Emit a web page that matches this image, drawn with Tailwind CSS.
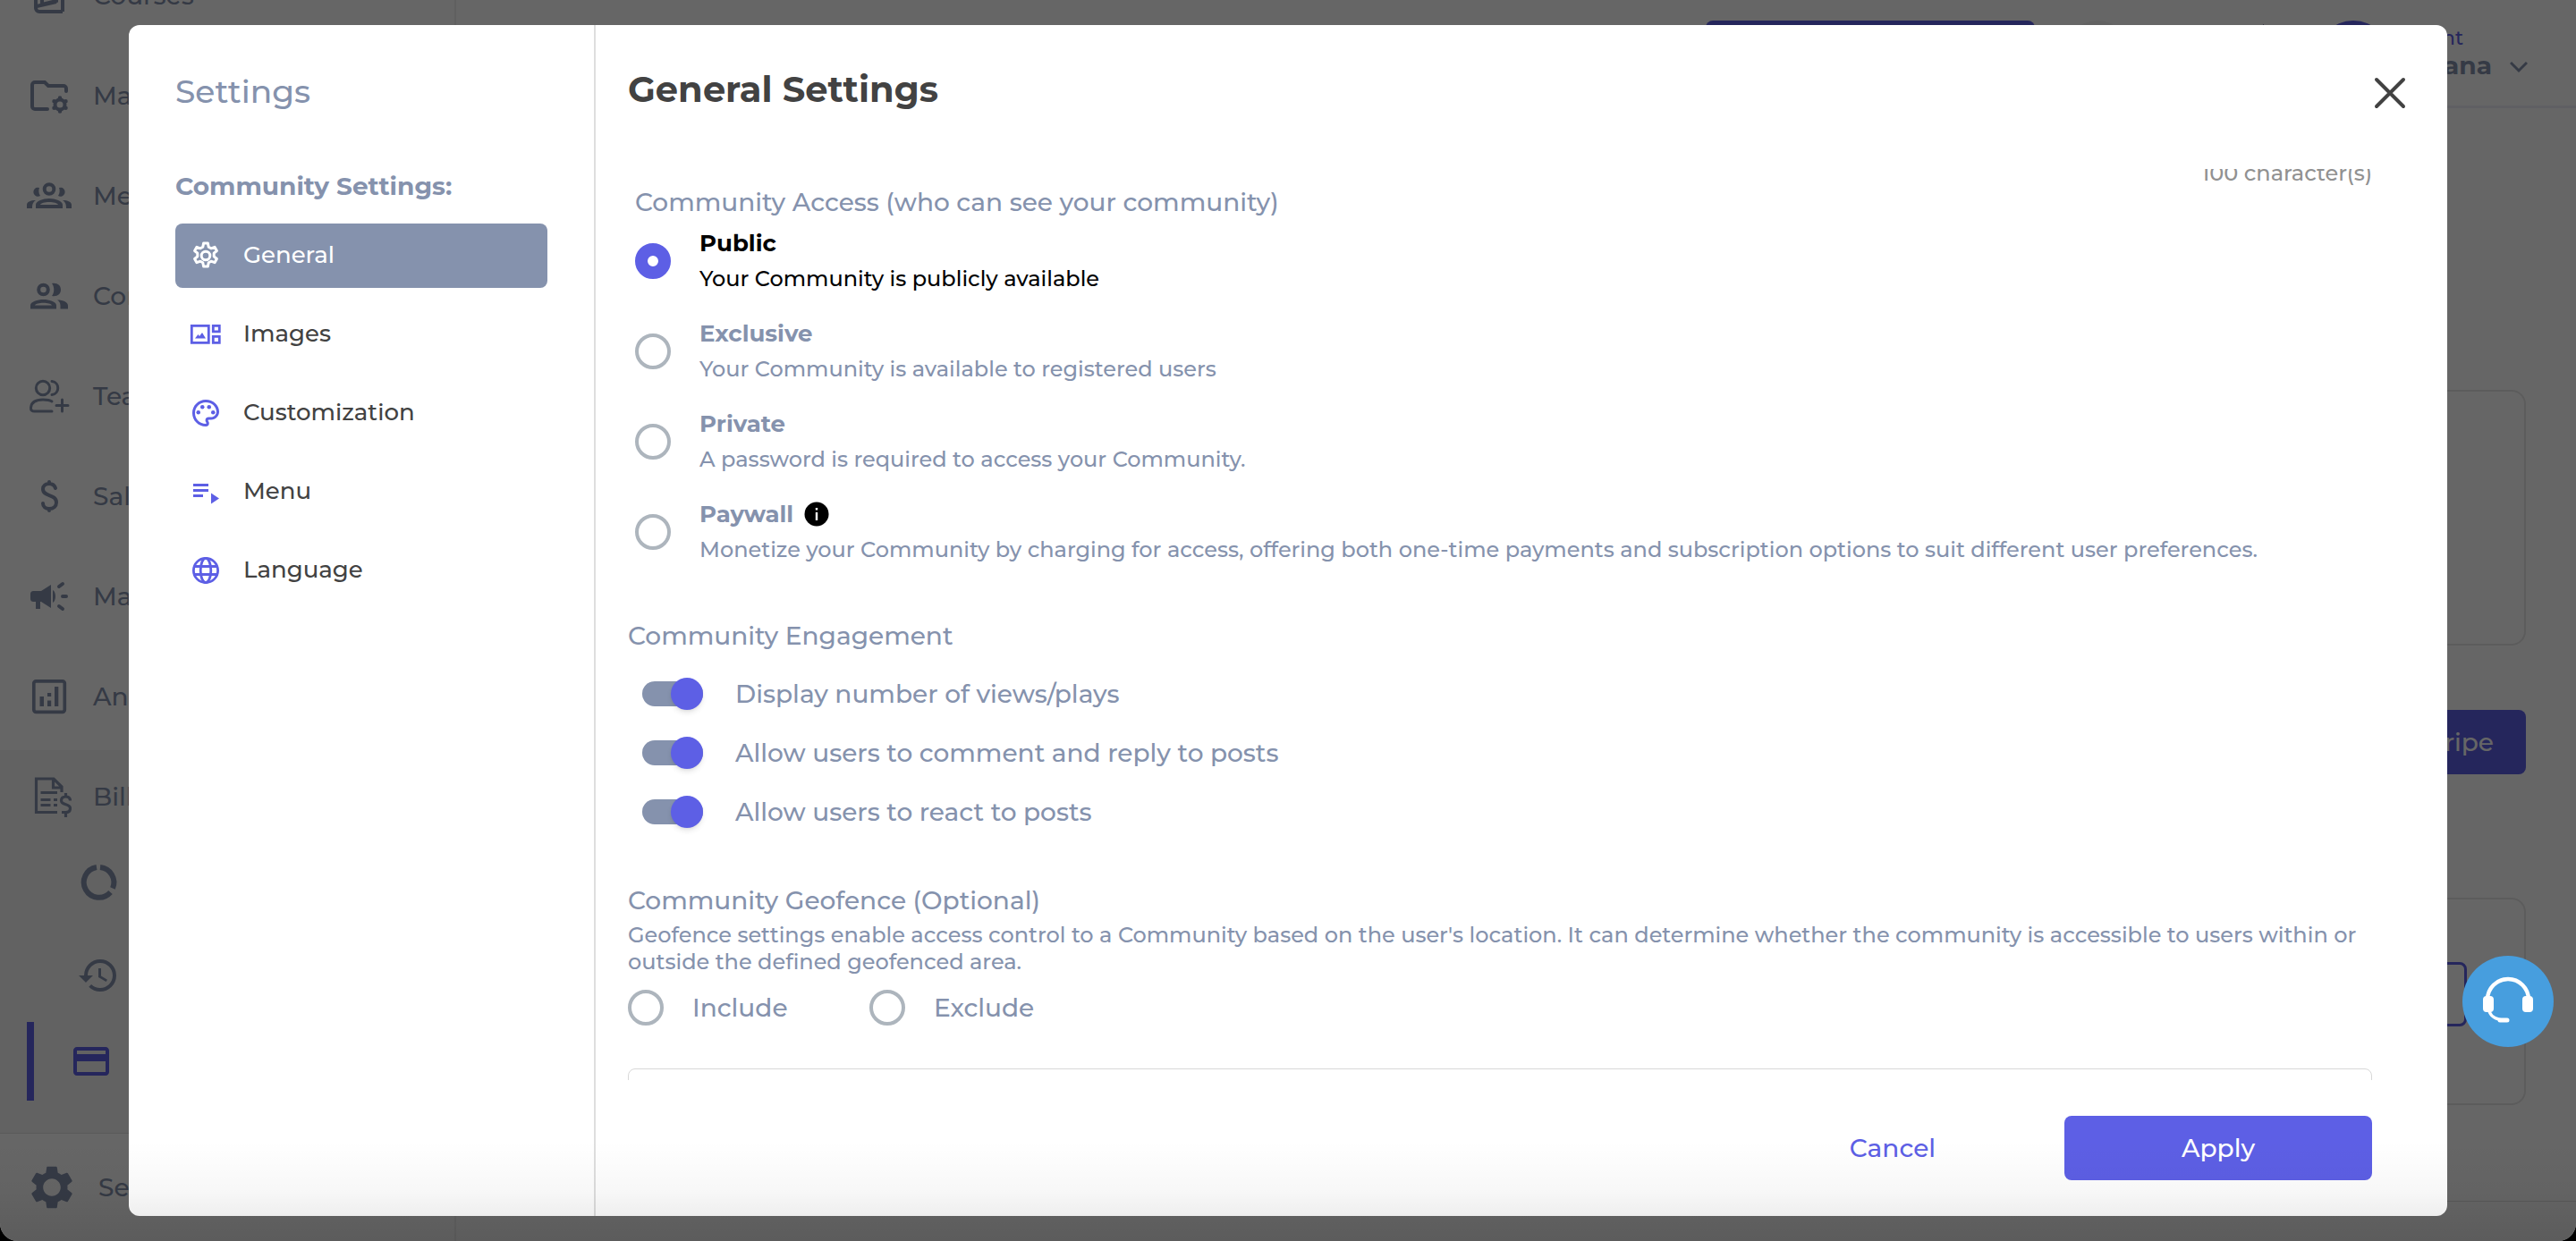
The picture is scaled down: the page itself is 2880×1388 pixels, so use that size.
<!DOCTYPE html>
<html lang="en">
<head>
    <meta charset="UTF-8">
    <meta name="viewport" content="width=device-width, initial-scale=1.0">
    <title>General Settings</title>
    <script src="https://cdn.jsdelivr.net/npm/@tailwindcss/browser@4"></script>
</head>
<body class="bg-black font-['Montserrat','Inter',sans-serif] font-medium">
    <div class="relative h-screen overflow-hidden rounded-b-[20px] bg-white text-[#8592ad]">
        <!-- Dashboard behind the dialog -->
        <div class="flex h-full">
            <aside class="flex w-[510px] shrink-0 flex-col border-r-2 border-[#f0f0f0] text-[28px]">
                <nav class="-mt-[61px]">
                    <a href="#" class="flex h-28 items-center gap-6 pl-[30px]">
                        <svg class="size-[50px]" viewBox="0 0 50 50" fill="none" stroke="currentColor" stroke-width="4"><path d="M40 43H14a4 4 0 0 1-4-4V10h30v33"/><path d="M17 10v25l16-4V10M11 37l22-5"/></svg>
                        <span>Courses</span>
                    </a>
                    <a href="#" class="flex h-28 items-center gap-6 pl-[30px]">
                        <svg class="size-[50px]" viewBox="0 0 50 50" fill="none" stroke="currentColor" stroke-width="4" stroke-linecap="round"><path d="M44 20v-3a3 3 0 0 0-3-3H24l-4-4H9a3 3 0 0 0-3 3v24a3 3 0 0 0 3 3h14"/><circle cx="37" cy="35" r="5.5"/><path stroke-width="4.5" d="M37 27.500v0M43.500 31.300v0M43.500 38.800v0M37 42.500v0M30.500 38.800v0M30.500 31.300v0"/></svg>
                        <span>Manage</span>
                    </a>
                    <a href="#" class="flex h-28 items-center gap-6 pl-[30px]">
                        <svg class="size-[50px]" viewBox="0 0 50 50" fill="currentColor"><circle cx="25" cy="17.500" r="5.300" fill="none" stroke="currentColor" stroke-width="4"/><path fill-rule="evenodd" d="M10 39v-4c0-4 8-7 15-7s15 3 15 7v4zm5-4h20c-1-2-5-3-10-3s-9 1-10 3z"/><path d="M14 16a5 5 0 1 0 1 9c-2-3-2-6-1-9zM36 16a5 5 0 1 1-1 9c2-3 2-6 1-9zM0 39v-4c0-3 4-5 10-5-3 2-4 4-4 9zM50 39v-4c0-3-4-5-10-5 3 2 4 4 4 9z"/></svg>
                        <span>Members</span>
                    </a>
                    <a href="#" class="flex h-28 items-center gap-6 pl-[30px]">
                        <svg class="size-[50px]" viewBox="0 0 50 50" fill="currentColor"><circle cx="18.500" cy="18" r="5.300" fill="none" stroke="currentColor" stroke-width="4"/><path fill-rule="evenodd" d="M4 39.500v-4c0-4 8-6.500 14.500-6.500S33 31.500 33 35.500v4zm5-4h19c-1-1.700-5-2.700-9.500-2.700S10 33.800 9 35.500z"/><path d="M28 11c6-1 10 2 10 7s-4 8-10 7c3-4 3-10 0-14zM34 29.500c7 0 12 2.500 12 6.500v3.500h-8.500V36c0-3-1-5-3.500-6.500z"/></svg>
                        <span>Community</span>
                    </a>
                    <a href="#" class="flex h-28 items-center gap-6 pl-[30px]">
                        <svg class="size-[50px]" viewBox="0 0 50 50" fill="none" stroke="currentColor" stroke-width="3" stroke-linecap="round"><circle cx="18" cy="16" r="7.700"/><path d="M28 8.500c9 1 9 14 0 15M28 31c-3-2-6-2-10-2-8 0-13 3-13.500 9-.2 3 1.500 4 4 4H28M39.500 29v13M33 35.500h13"/></svg>
                        <span>Team</span>
                    </a>
                    <a href="#" class="flex h-28 items-center gap-6 pl-[30px]">
                        <svg class="size-[50px]" viewBox="0 0 50 50" fill="none" stroke="currentColor" stroke-width="4" stroke-linecap="round"><path d="M32 16c-1-3-3-5-7-5s-7 2-7 6c0 9 15 5 15 15 0 4-3 7-8 7-4 0-7-2-7-6M25 9v2M25 39v2"/></svg>
                        <span>Sales</span>
                    </a>
                    <a href="#" class="flex h-28 items-center gap-6 pl-[30px]">
                        <svg class="size-[50px]" viewBox="0 0 50 50" fill="currentColor"><path d="M8 19h8l11-7v26l-11-7h-1v8h-5v-8H8c-3 0-4-1-4-4v-4c0-3 1-4 4-4zM29 18c4 2 4 12 0 14z"/><path fill="none" stroke="currentColor" stroke-width="4" stroke-linecap="round" d="m36 14 4-3M40 25h4M36 36l4 3"/></svg>
                        <span>Marketing</span>
                    </a>
                    <a href="#" class="flex h-28 items-center gap-6 pl-[30px]">
                        <svg class="size-[50px]" viewBox="0 0 50 50" fill="currentColor"><rect x="7.800" y="7.800" width="34.500" height="34.500" rx="2.500" fill="none" stroke="currentColor" stroke-width="3.700"/><path d="M14.500 25H19v11h-4.500zM23 21h4.200v4H23zM23 29.500h4.200V36H23zM31 14h4.300v22H31z"/></svg>
                        <span>Analytics</span>
                    </a>
                </nav>
                <div class="mt-1 h-[428px] bg-[#f5f5f5]">
                    <a href="#" class="flex h-[104px] items-center gap-6 pl-[30px]">
                        <svg class="size-[50px]" viewBox="0 0 50 50" fill="none" stroke="currentColor" stroke-width="3.200"><path d="M34 42.500H10.500V5H30l9 9v6M29.500 5v10H39M15.500 20.500H34M15.500 28.500h11M30 28.500h4M15.500 34.500h11M30 34.500h4"/><path d="M48.500 29.500c0-3-2-4.500-5-4.500s-5 1.500-5 4.500c0 5.500 10 3 10 8.500 0 3-2 4.500-5 4.500H39M43.500 21v4M43.500 42.500V48"/></svg>
                        <span>Billing</span>
                    </a>
                    <a href="#" aria-label="Usage" class="flex h-[88px] items-center pl-[86px]">
                        <svg class="size-12" viewBox="0 0 48 48" fill="none" stroke="currentColor" stroke-width="6"><path d="M26 7a17 17 0 0 1 14 23.500M37.500 35A17 17 0 1 1 22 7"/></svg>
                    </a>
                    <a href="#" aria-label="History" class="flex h-28 items-center pt-2 pl-[86px]">
                        <svg class="size-12" viewBox="0 0 24 24" fill="currentColor"><path d="M13 3a9 9 0 0 0-9 9H1l3.890 3.890.070.140L9 12H6c0-3.870 3.130-7 7-7s7 3.130 7 7-3.130 7-7 7c-1.930 0-3.680-.790-4.940-2.060l-1.420 1.420A8.950 8.950 0 0 0 13 21a9 9 0 0 0 0-18zm-1 5v5l4.280 2.540.720-1.210-3.500-2.080V8H12z"/></svg>
                    </a>
                    <a href="#" aria-label="Payments" class="ml-[30px] flex h-[88px] items-center border-l-8 border-[#5d5fe5] pl-10 text-[#5d5fe5]">
                        <svg class="size-12" viewBox="0 0 24 24" fill="currentColor"><path d="M20 4H4c-1.110 0-2 .890-2 2v12c0 1.110.890 2 2 2h16c1.110 0 2-.890 2-2V6c0-1.110-.890-2-2-2zm0 14H4v-6h16v6zm0-10H4V6h16v2z"/></svg>
                    </a>
                </div>
                <a href="#" class="flex flex-1 items-center gap-6 border-t border-[#e2e2e2] pl-[30px]">
                    <svg class="size-14" viewBox="0 0 24 24" fill="currentColor"><path d="M19.430 12.980c.040-.320.070-.640.070-.980s-.030-.660-.070-.980l2.110-1.650c.190-.150.240-.420.120-.640l-2-3.460c-.120-.220-.390-.300-.610-.220l-2.490 1c-.520-.400-1.080-.730-1.690-.980l-.380-2.650A.488.488 0 0 0 14 2h-4c-.250 0-.460.180-.490.420l-.380 2.650c-.610.250-1.170.590-1.690.980l-2.490-1c-.230-.090-.490 0-.610.220l-2 3.460c-.130.220-.070.490.120.640l2.110 1.650c-.040.320-.070.650-.070.980s.030.660.070.980l-2.110 1.650c-.190.150-.240.420-.120.640l2 3.460c.120.220.390.300.610.220l2.490-1c.520.400 1.080.730 1.690.980l.380 2.650c.030.240.240.420.490.420h4c.250 0 .460-.180.490-.420l.380-2.650c.610-.250 1.170-.590 1.690-.980l2.490 1c.230.090.490 0 .610-.220l2-3.460c.120-.220.070-.490-.120-.640l-2.110-1.650zM12 16.200c-2.310 0-4.200-1.890-4.200-4.200s1.890-4.200 4.200-4.200 4.200 1.890 4.200 4.200-1.890 4.200-4.200 4.200z"/></svg>
                    <span>Settings</span>
                </a>
            </aside>

            <main class="flex min-w-0 flex-1 flex-col">
                <header class="flex h-[121px] items-start justify-end border-b-[3px] border-[#eeeef8] pt-[23px] pr-[54px]">
                    <button class="mr-8 h-[72px] w-[368px] rounded-lg bg-[#5d5fe5]" aria-label="Create"></button>
                    <span class="mr-[147px] size-[76px] rounded-full bg-[#f5f5f5]"></span>
                    <span class="mt-1 mr-[58px] h-16 w-px bg-[#8592ad]"></span>
                    <span class="mr-2 size-[84px] rounded-full bg-[#5d5fe5]"></span>
                    <button class="flex items-end gap-5 text-right">
                        <span>
                            <span class="block pr-8 text-[22px] leading-10 text-[#5d5fe5]">Client</span>
                            <span class="block w-[105px] text-[28px] leading-5 font-bold">Diana</span>
                        </span>
                        <svg class="h-4 w-5" viewBox="0 0 20 16" fill="none" stroke="currentColor" stroke-width="3"><path d="m1 3 9 9 9-9"/></svg>
                    </button>
                </header>
                <div class="flex flex-1 flex-col pt-[315px] pr-14 pl-12">
                    <section class="h-[286px] rounded-2xl border-2 border-[#e6e6e6]"></section>
                    <button class="mt-[72px] h-[72px] self-end rounded-lg bg-[#5d5fe5] px-9 text-[28px] text-white">Connect Stripe</button>
                    <section class="mt-[138px] h-[232px] rounded-2xl border-2 border-[#e6e6e6] pt-[70px] pr-16 text-right">
                        <button class="h-[72px] w-80 rounded-lg border-[3px] border-[#5d5fe5]" aria-label="Manage plan"></button>
                    </section>
                    <div class="-mr-14 mt-[107px] border-t border-[#dedede]"></div>
                </div>
            </main>
        </div>

        <!-- Backdrop and dialog -->
        <div class="absolute inset-0 flex items-center justify-center bg-black/60">
            <div role="dialog" aria-labelledby="dialog-title" class="flex h-[96%] w-[90%] overflow-hidden rounded-xl bg-white">
                <aside class="w-[522px] shrink-0 border-r-2 border-[#dedede] px-13">
                    <h2 class="pt-[54px] text-[36px] leading-10 font-medium">Settings</h2>
                    <h3 class="mt-[66px] text-[28px] leading-10 font-bold">Community Settings:</h3>
                    <nav class="mt-[22px] flex flex-col gap-4 text-[26px] text-[#424242]">
                        <a href="#" class="flex h-[72px] items-center gap-6 rounded-lg bg-[#8592ad] pl-4 text-white">
                            <svg class="size-9" viewBox="0 0 36 36" fill="none" stroke="currentColor" stroke-width="3" stroke-linejoin="round"><path d="M15.600 4h4.800l.8 4.200 2.800 1.600 4-1.500 2.400 4.200-3.200 2.700v3.600l3.200 2.700-2.400 4.200-4-1.500-2.800 1.600-.8 4.200h-4.800l-.8-4.200-2.800-1.600-4 1.500-2.400-4.200 3.200-2.700v-3.600l-3.200-2.700L8 8.300l4 1.500 2.800-1.600z"/><circle cx="18" cy="18" r="4.800"/></svg>
                            General
                        </a>
                        <a href="#" class="flex h-[72px] items-center gap-6 pl-4">
                            <svg class="size-9 text-[#5d5fe5]" viewBox="0 0 36 36" fill="none" stroke="currentColor" stroke-width="2.800"><path d="M2.300 8.300h19v19h-19zM26.300 8.300h7v6.500h-7zM26.300 20.300h7v7h-7z"/><path fill="currentColor" stroke="none" d="m6 22.500 3.500-4.500 1.500 2 3-4 4 6.500z"/></svg>
                            Images
                        </a>
                        <a href="#" class="flex h-[72px] items-center gap-6 pl-4">
                            <svg class="size-9 text-[#5d5fe5]" viewBox="0 0 24 24" fill="currentColor"><path d="M12 22C6.490 22 2 17.510 2 12S6.490 2 12 2s10 4.040 10 9c0 3.310-2.690 6-6 6h-1.770c-.280 0-.500.220-.500.500 0 .120.050.230.130.330.410.470.640 1.060.640 1.670A2.500 2.500 0 0 1 12 22zm0-18c-4.410 0-8 3.590-8 8s3.590 8 8 8c.280 0 .500-.220.500-.500a.540.540 0 0 0-.140-.350c-.410-.460-.630-1.050-.630-1.650a2.500 2.500 0 0 1 2.500-2.500H16c2.210 0 4-1.790 4-4 0-3.860-3.590-7-8-7z"/><circle cx="6.500" cy="11.500" r="1.500"/><circle cx="9.500" cy="7.500" r="1.500"/><circle cx="14.500" cy="7.500" r="1.500"/><circle cx="17.500" cy="11.500" r="1.500"/></svg>
                            Customization
                        </a>
                        <a href="#" class="flex h-[72px] items-center gap-6 pl-4">
                            <svg class="size-9 text-[#5d5fe5]" viewBox="0 0 36 36" fill="currentColor"><path d="M4 9h17v3H4zM4 15h17v3H4zM4 21h11v3H4zM24 19.500l9 6-9 6z"/></svg>
                            Menu
                        </a>
                        <a href="#" class="flex h-[72px] items-center gap-6 pl-4">
                            <svg class="size-9 text-[#5d5fe5]" viewBox="0 0 36 36" fill="none" stroke="currentColor" stroke-width="2.800"><circle cx="18" cy="18" r="13.600"/><ellipse cx="18" cy="18" rx="5.800" ry="13.600"/><path d="M5 13.500h26M5 22.500h26"/></svg>
                            Language
                        </a>
                    </nav>
                </aside>

                <div class="flex min-w-0 flex-1 flex-col pl-9">
                    <div class="flex h-[161px] items-start justify-between pr-[46px]">
                        <h1 id="dialog-title" class="pt-[52px] text-[40px] leading-10 font-bold text-[#424242]">General Settings</h1>
                        <button aria-label="Close" class="mt-[58px] text-[#424242]">
                            <svg class="size-9" viewBox="0 0 36 36" fill="none" stroke="currentColor" stroke-width="4" stroke-linecap="round"><path d="m3 3 30 30M33 3 3 33"/></svg>
                        </button>
                    </div>

                    <div class="min-h-0 flex-1 overflow-hidden pr-[84px]">
                        <p class="-mt-[11px] text-right text-[24px] leading-8 text-[#919191]">100 character(s)</p>
                        <fieldset class="px-2">
                            <legend class="text-[28px] leading-8">Community Access (who can see your community)</legend>
                            <div class="mt-2.5 flex flex-col gap-[21px]">
                                <label class="flex items-center gap-8 text-black">
                                    <input type="radio" name="access" checked class="size-10 shrink-0 appearance-none rounded-full border-4 border-[#adb5bd] checked:border-[14px] checked:border-[#5d5fe5]">
                                    <span class="text-[24px] leading-10"><b class="block text-[26px] font-bold">Public</b>Your Community is publicly available</span>
                                </label>
                                <label class="flex items-center gap-8">
                                    <input type="radio" name="access" class="size-10 shrink-0 appearance-none rounded-full border-4 border-[#adb5bd] checked:border-[14px] checked:border-[#5d5fe5]">
                                    <span class="text-[24px] leading-10"><b class="block text-[26px] font-bold">Exclusive</b>Your Community is available to registered users</span>
                                </label>
                                <label class="flex items-center gap-8">
                                    <input type="radio" name="access" class="size-10 shrink-0 appearance-none rounded-full border-4 border-[#adb5bd] checked:border-[14px] checked:border-[#5d5fe5]">
                                    <span class="text-[24px] leading-10"><b class="block text-[26px] font-bold">Private</b>A password is required to access your Community.</span>
                                </label>
                                <label class="flex items-center gap-8">
                                    <input type="radio" name="access" class="size-10 shrink-0 appearance-none rounded-full border-4 border-[#adb5bd] checked:border-[14px] checked:border-[#5d5fe5]">
                                    <span class="text-[24px] leading-10">
                                        <b class="flex items-center gap-3 text-[26px] font-bold">Paywall
                                            <svg class="size-7" viewBox="0 0 28 28"><circle cx="14" cy="14" r="13.500" fill="#000"/><path fill="#fff" d="M12.800 7h2.400v2.600h-2.400zM12.800 12h2.400v9h-2.400z"/></svg>
                                        </b>Monetize your Community by charging for access, offering both one-time payments and subscription options to suit different user preferences.</span>
                                </label>
                            </div>
                        </fieldset>

                        <fieldset class="mt-14">
                            <legend class="text-[28px] leading-10">Community Engagement</legend>
                            <div class="mt-3 pl-4 text-[28px]">
                                <label class="flex h-[66px] items-center gap-9">
                                    <input type="checkbox" checked class="flex h-7 w-[68px] shrink-0 appearance-none items-center rounded-full bg-[#8592ad] before:size-9 before:shrink-0 before:rounded-full before:bg-white before:shadow-md checked:justify-end checked:before:bg-[#5d5fe5]">
                                    Display number of views/plays
                                </label>
                                <label class="flex h-[66px] items-center gap-9">
                                    <input type="checkbox" checked class="flex h-7 w-[68px] shrink-0 appearance-none items-center rounded-full bg-[#8592ad] before:size-9 before:shrink-0 before:rounded-full before:bg-white before:shadow-md checked:justify-end checked:before:bg-[#5d5fe5]">
                                    Allow users to comment and reply to posts
                                </label>
                                <label class="flex h-[66px] items-center gap-9">
                                    <input type="checkbox" checked class="flex h-7 w-[68px] shrink-0 appearance-none items-center rounded-full bg-[#8592ad] before:size-9 before:shrink-0 before:rounded-full before:bg-white before:shadow-md checked:justify-end checked:before:bg-[#5d5fe5]">
                                    Allow users to react to posts
                                </label>
                            </div>
                        </fieldset>

                        <fieldset class="mt-[46px]">
                            <legend class="text-[28px] leading-10">Community Geofence (Optional)</legend>
                            <p class="mt-1 text-[24px] leading-[30px]">Geofence settings enable access control to a Community based on the user's location. It can determine whether the community is accessible to users within or outside the defined geofenced area.</p>
                            <div class="mt-4 flex text-[28px] leading-10">
                                <label class="flex w-[270px] items-center gap-8">
                                    <input type="radio" name="geofence" class="size-10 appearance-none rounded-full border-4 border-[#adb5bd] checked:border-[14px] checked:border-[#5d5fe5]">
                                    Include
                                </label>
                                <label class="flex items-center gap-8">
                                    <input type="radio" name="geofence" class="size-10 appearance-none rounded-full border-4 border-[#adb5bd] checked:border-[14px] checked:border-[#5d5fe5]">
                                    Exclude
                                </label>
                            </div>
                        </fieldset>
                        <div class="mt-12 h-40 rounded-lg border border-[#d8d8d8]"></div>
                    </div>

                    <div class="flex justify-end gap-12 py-10 pr-[84px] text-[28px]">
                        <button class="h-[72px] w-72 rounded-lg text-[#5d5fe5]">Cancel</button>
                        <button class="h-[72px] w-[344px] rounded-lg bg-[#5d5fe5] text-white">Apply</button>
                    </div>
                </div>
            </div>
        </div>

        <div class="pointer-events-none absolute inset-x-0 bottom-0 h-28 bg-linear-to-b from-transparent via-black/3 to-black/10"></div>

        <!-- Support chat -->
        <button aria-label="Support" class="absolute right-[25px] bottom-[217px] size-[102px] rounded-full bg-[#479ede]">
            <svg class="size-full" viewBox="0 0 102 102" fill="none" stroke="#fff" stroke-linecap="round"><path stroke-width="4.500" d="M28 49a23 23 0 0 1 46 0"/><path stroke-width="3" d="M29 58c1 10 8 14 20 14"/><path stroke-width="5" d="M42 72h8"/><rect x="24" y="46" width="10" height="16" rx="3" fill="#fff" stroke-width="2"/><rect x="68" y="46" width="10" height="16" rx="3" fill="#fff" stroke-width="2"/></svg>
        </button>
    </div>
</body>
</html>
